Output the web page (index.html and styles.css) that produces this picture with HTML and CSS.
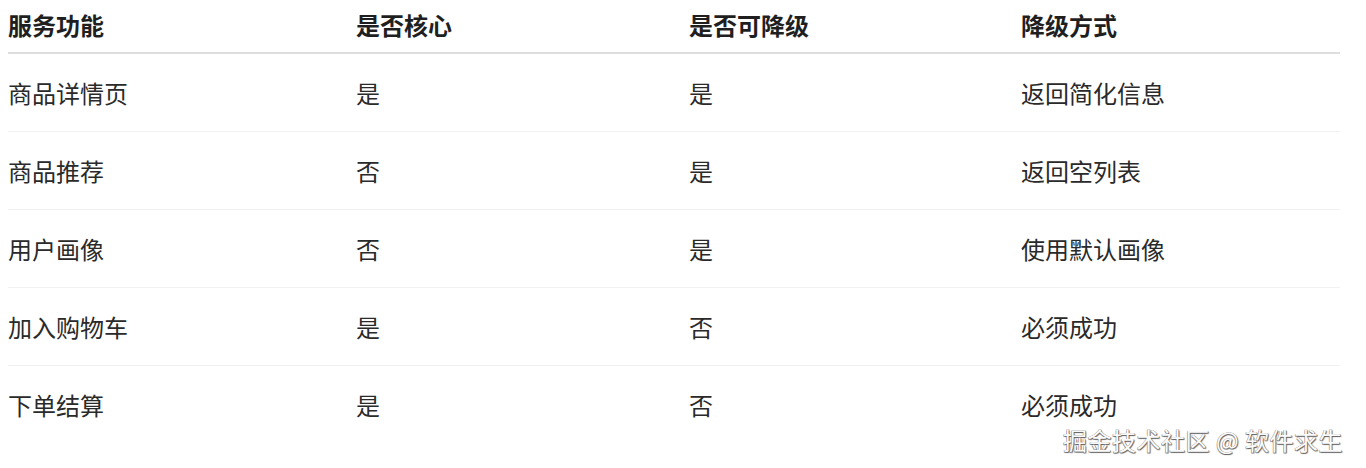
FILE: index.html
```html
<!DOCTYPE html>
<html lang="zh">
<head>
<meta charset="utf-8">
<link rel="stylesheet" href="styles.css">
</head>
<body>
<div class="page">
  <table class="tbl">
    <thead>
      <tr><th>服务功能</th><th>是否核心</th><th>是否可降级</th><th>降级方式</th></tr>
    </thead>
    <tbody>
      <tr><td>商品详情页</td><td>是</td><td>是</td><td>返回简化信息</td></tr>
      <tr><td>商品推荐</td><td>否</td><td>是</td><td>返回空列表</td></tr>
      <tr><td>用户画像</td><td>否</td><td>是</td><td>使用默认画像</td></tr>
      <tr><td>加入购物车</td><td>是</td><td>否</td><td>必须成功</td></tr>
      <tr class="last"><td>下单结算</td><td>是</td><td>否</td><td>必须成功</td></tr>
    </tbody>
  </table>
  <div class="watermark">掘金技术社区 @ 软件求生</div>
</div>
</body>
</html>
```
FILE: styles.css
```css
html, body { margin: 0; padding: 0; background: #fff; }
body { font-family: "Noto Sans CJK SC", "Noto Sans", sans-serif; }
.page { position: relative; width: 1366px; height: 468px; overflow: hidden; padding: 0 26px 0 8px; box-sizing: border-box; }
.tbl { width: 1332px; border-collapse: collapse; table-layout: fixed; font-size: 24px; }
.tbl th, .tbl td { text-align: left; padding: 0; vertical-align: middle; }
.tbl th:nth-child(1) { width: 348px; }
.tbl th:nth-child(2) { width: 333px; }
.tbl th:nth-child(3) { width: 332px; }
.tbl th { height: 53px; font-weight: 700; color: #1f1f1f; border-bottom: 2px solid #dedede; line-height: 1; padding-bottom: 2px; box-sizing: border-box; }
.tbl td { height: 77px; color: #2a2a2a; border-bottom: 1px solid #f1f1f1; line-height: 1; }
.tbl tr.last td { border-bottom: none; }
.watermark { position: absolute; left: 1063px; top: 428px; font-size: 24px; line-height: 24px; color: #fafafa; letter-spacing: 0.5px; text-shadow: 1px 1px 1px #666, -0.5px -0.5px 0 #999, 0.5px -0.5px 0 #999, -0.5px 0.5px 0 #999; white-space: nowrap; }
```
